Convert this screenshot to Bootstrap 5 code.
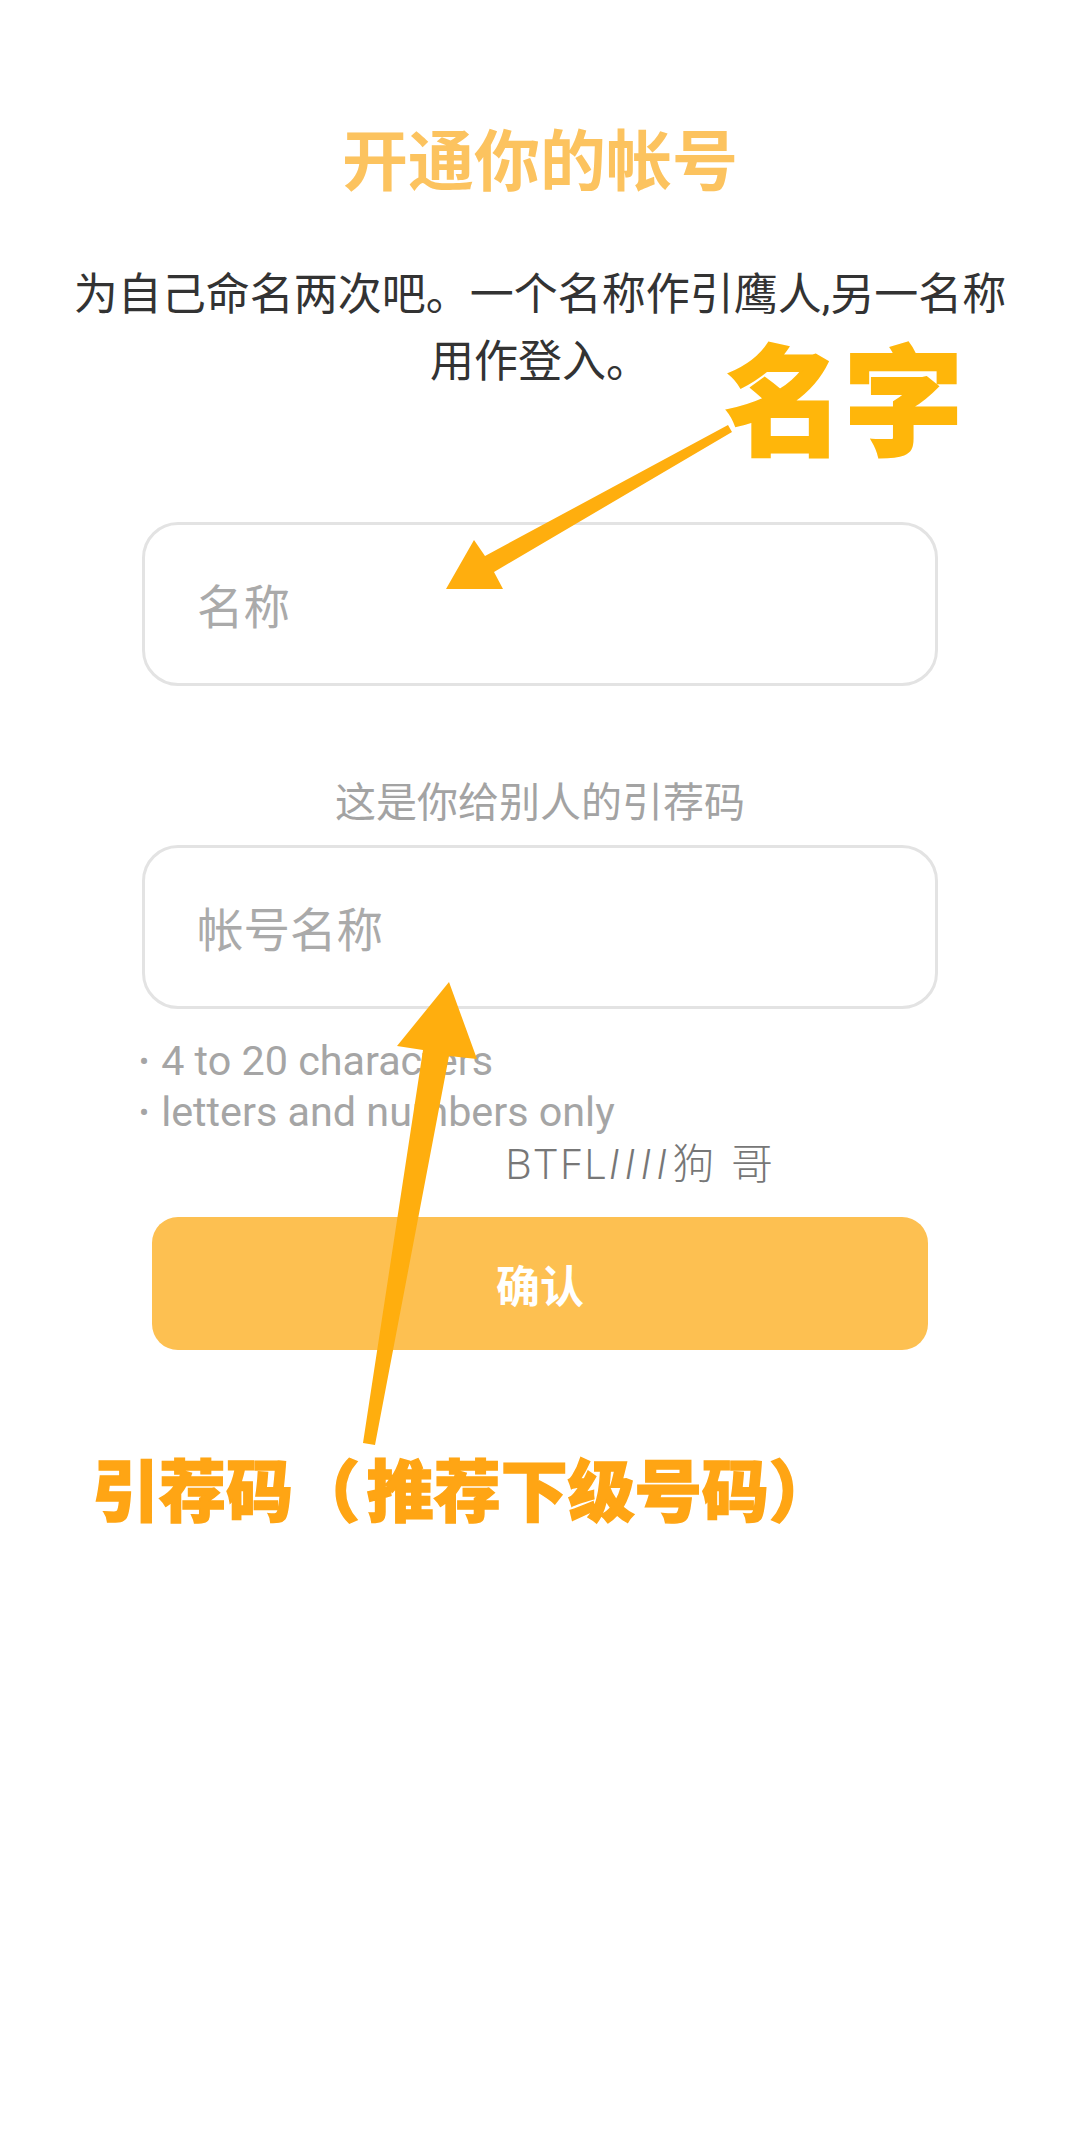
<!DOCTYPE html>
<html lang="zh">
<head>
<meta charset="utf-8">
<title>开通你的帐号</title>
<link href="https://cdn.jsdelivr.net/npm/bootstrap@5.3.0/dist/css/bootstrap.min.css" rel="stylesheet">
<style>
html,body{background:#fff;height:2152px;overflow:hidden}
body{font-family:Roboto,"Noto Sans CJK SC",sans-serif;position:relative;color:#333}
.page-wrap{width:1080px;height:2152px;padding-top:121px}
.signup-title{font-size:66px;line-height:84px;font-weight:700;color:#fcc35f;margin:0 0 57px}
.signup-intro{font-size:44px;line-height:67px;color:#333;margin:0 0 126px;padding:0 66px}
.field-box{width:796px;height:164px;margin:0 auto;border:3px solid #e3e3e3;border-radius:36px;padding:8px 52px 0;font-size:46.5px;box-shadow:none}
.field-box::placeholder{color:#aaa;opacity:1}
.field-hint{font-size:41px;line-height:50px;color:#a3a3a3;margin:92px 0 17px}
.rule-list{list-style:none;padding:0 0 0 139px;margin:27px 0 0;font-size:41.3px;line-height:50px;color:#a5a5a5}
.rule-list li::before{content:"•";font-size:30px;margin-right:12px;vertical-align:3px}
.submit-btn{display:block;width:776px;height:133px;margin:79px auto 0;border:0;border-radius:26px;background:#fdc051;color:#fff;font-size:44px;font-weight:700;padding:8px 0 0}
.submit-btn:hover{background:#fdc051;color:#fff}
.mark-layer{position:absolute;left:0;top:0;pointer-events:none}
.note-name{position:absolute;left:725px;top:346px;font-size:119px;line-height:120px;font-weight:900;color:#ffb60a;-webkit-text-stroke:2px #ffb60a;white-space:nowrap}
.note-code{position:absolute;left:92px;top:1446px;font-size:67px;line-height:94px;font-weight:900;color:#ffa514;-webkit-text-stroke:1.5px #ffa514;white-space:nowrap}
.note-hand{position:absolute;left:505px;top:1137px;font-family:"Noto Sans","Noto Sans CJK SC",sans-serif;font-size:42px;line-height:52px;font-weight:300;letter-spacing:3px;color:#777;white-space:nowrap}
.note-slant{font-family:Roboto,sans-serif;font-style:italic;letter-spacing:5px}
</style>
</head>
<body>
<main class="page-wrap text-center">
  <h1 class="signup-title">开通你的帐号</h1>
  <p class="signup-intro">为自己命名两次吧。一个名称作引鹰人,另一名称用作登入。</p>
  <input class="form-control field-box" type="text" placeholder="名称" aria-label="名称">
  <p class="field-hint">这是你给别人的引荐码</p>
  <input class="form-control field-box" type="text" placeholder="帐号名称" aria-label="帐号名称">
  <ul class="rule-list text-start">
    <li>4 to 20 characters</li>
    <li>letters and numbers only</li>
  </ul>
  <button class="btn submit-btn" type="button">确认</button>
</main>
<svg class="mark-layer" width="1080" height="2152" viewBox="0 0 1080 2152" aria-hidden="true">
  <polygon fill="#ffae0e" points="728,425 732,432 494,572 503,589 446,589 474,540 485,556"/>
  <polygon fill="#ffae0e" points="449,982 477,1059 449,1056 375,1445 363,1443 423,1050 397,1046"/>
</svg>
<div class="note-name">名字</div>
<div class="note-hand">BTFL<span class="note-slant">IIII</span>狗 哥</div>
<div class="note-code">引荐码（&#8202;推荐下级号码）</div>
</body>
</html>
